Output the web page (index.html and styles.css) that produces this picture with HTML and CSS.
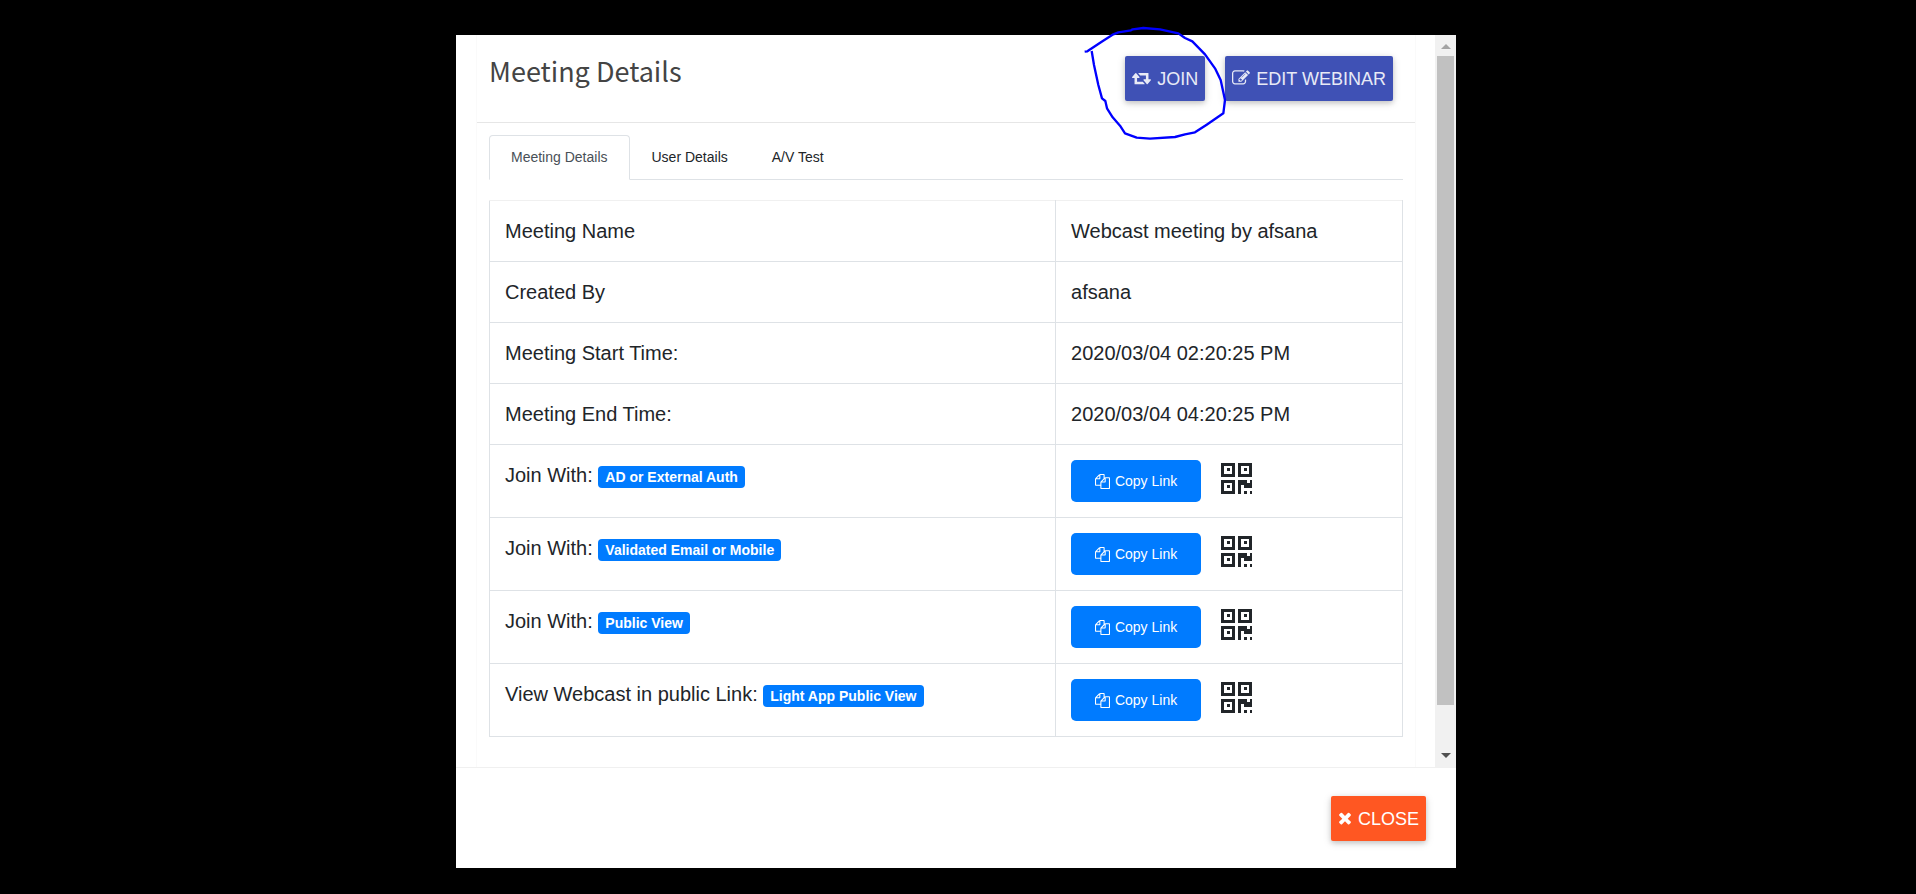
FILE: index.html
```html
<!DOCTYPE html>
<html lang="en">

<head>
    <meta charset="UTF-8">
    <meta name="viewport" content="width=device-width, initial-scale=1.0">
    <title>Meeting Details</title>
    <link rel="stylesheet" href="styles.css">
</head>

<body>
    <!-- shared icons -->
    <svg class="sprite" aria-hidden="true">
        <symbol id="retweet" viewBox="0 0 1920 1792">
            <path d="M1280 1504q0 13-9.500 22.500t-22.500 9.500h-960q-8 0-13.500-2t-9-7-5.500-8-3-11.500-1-11.500v-600h-192q-26 0-45-19t-19-45q0-24 15-41l320-384q19-22 49-22t49 22l320 384q15 17 15 41 0 26-19 45t-45 19h-192v384h576q16 0 25 11l160 192q7 10 7 21zm640-416q0 24-15 41l-320 384q-20 23-49 23t-49-23l-320-384q-15-17-15-41 0-26 19-45t45-19h192v-384h-576q-16 0-25-12l-160-192q-7-9-7-20 0-13 9.500-22.500t22.500-9.500h960q8 0 13.500 2t9 7 5.500 8 3 11.500 1 11.500v600h192q26 0 45 19t19 45z" />
        </symbol>
        <symbol id="edit" viewBox="0 0 1792 1792">
            <path d="M888 1184l116-116-152-152-116 116v56h96v96h56zm440-720q-16-16-33 1l-350 350q-17 17-1 33t33-1l350-350q17-17 1-33zm80 594v190q0 119-84.500 203.500t-203.500 84.500h-832q-119 0-203.500-84.500t-84.500-203.500v-832q0-119 84.500-203.500t203.500-84.500h832q63 0 117 25 15 7 18 23 3 17-9 29l-49 49q-14 14-32 8-23-6-45-6h-832q-66 0-113 47t-47 113v832q0 66 47 113t113 47h832q66 0 113-47t47-113v-126q0-13 9-22l64-64q15-15 35-7t20 29zm-96-738l288 288-672 672h-288v-288zm444 132l-92 92-288-288 92-92q28-28 68-28t68 28l152 152q28 28 28 68t-28 68z" />
        </symbol>
        <symbol id="copy" viewBox="0 0 1792 1792">
            <path d="M1696 384q40 0 68 28t28 68v1216q0 40-28 68t-68 28h-960q-40 0-68-28t-28-68v-288h-544q-40 0-68-28t-28-68v-672q0-40 20-88t48-76l408-408q28-28 76-48t88-20h416q40 0 68 28t28 68v328q68-40 128-40h416zm-544 213l-299 299h299v-299zm-640-384l-299 299h299v-299zm196 647l316-316v-416h-384v416q0 40-28 68t-68 28h-416v640h512v-256q0-40 20-88t48-76zm956 804v-1152h-384v416q0 40-28 68t-68 28h-416v640h896z" />
        </symbol>
        <symbol id="times" viewBox="192 0 1408 1792">
            <path d="M1490 1322q0 40-28 68l-136 136q-28 28-68 28t-68-28l-294-294-294 294q-28 28-68 28t-68-28l-136-136q-28-28-28-68t28-68l294-294-294-294q-28-28-28-68t28-68l136-136q28-28 68-28t68 28l294 294 294-294q28-28 68-28t68 28l136 136q28 28 28 68t-28 68l-294 294 294 294q28 28 28 68z" />
        </symbol>
        <symbol id="qrcode" viewBox="0 0 31 31">
            <path fill-rule="evenodd" d="M0 0h14v14H0zM3 3v8h8V3zM6 5h3v3H6zM17 0h14v14H17zM20 3v8h8V3zM23 5h3v3h-3zM0 17h14v14H0zM3 20v8h8v-8zM6 22h3v3H6zM17 17h9v3h3v-3h2v8h-8v-3h-3v9h-3zM23 28h3v3h-3zM29 28h2v3h-2z" />
        </symbol>
    </svg>

    <div class="overlay">
        <div class="modal" role="dialog" aria-labelledby="title">
            <div class="modal-body">
                <div class="content">
                    <div class="card">
                        <header class="card-header">
                            <h1 id="title">Meeting Details</h1>
                            <div class="actions">
                                <div class="marked">
                                    <button type="button" class="btn btn-indigo"><svg class="icon-wide"><use href="#retweet" /></svg>JOIN</button>
                                    <!-- pen mark round the join button -->
                                    <svg class="pen" viewBox="60 9 450 360" aria-hidden="true">
                                        <path d="M74 95L82 94L125 65L160 43L175 37L213 31L218 28L250 24L300 28L355 40L375 54L397 64L435 103L465 145L482 180L489 212L495 240L490 280L440 314L405 337L375 343L345 351L270 356L230 353L195 340L180 317L158 292L141 265L136 243L126 235L115 195L102 135L95 93" />
                                    </svg>
                                </div>
                                <button type="button" class="btn btn-indigo"><svg class="icon"><use href="#edit" /></svg>EDIT WEBINAR</button>
                            </div>
                        </header>

                        <div class="card-body">
                            <nav class="tabs">
                                <a href="#" class="active">Meeting Details</a>
                                <a href="#">User Details</a>
                                <a href="#">A/V Test</a>
                            </nav>

                            <table>
                                <tr>
                                    <td>Meeting Name</td>
                                    <td>Webcast meeting by afsana</td>
                                </tr>
                                <tr>
                                    <td>Created By</td>
                                    <td>afsana</td>
                                </tr>
                                <tr>
                                    <td>Meeting Start Time:</td>
                                    <td>2020/03/04 02:20:25 PM</td>
                                </tr>
                                <tr>
                                    <td>Meeting End Time:</td>
                                    <td>2020/03/04 04:20:25 PM</td>
                                </tr>
                                <tr>
                                    <td>Join With: <span class="badge">AD or External Auth</span></td>
                                    <td>
                                        <div class="link">
                                            <button type="button" class="btn-copy"><svg><use href="#copy" /></svg>Copy Link</button>
                                            <svg class="qr"><use href="#qrcode" /></svg>
                                        </div>
                                    </td>
                                </tr>
                                <tr>
                                    <td>Join With: <span class="badge">Validated Email or Mobile</span></td>
                                    <td>
                                        <div class="link">
                                            <button type="button" class="btn-copy"><svg><use href="#copy" /></svg>Copy Link</button>
                                            <svg class="qr"><use href="#qrcode" /></svg>
                                        </div>
                                    </td>
                                </tr>
                                <tr>
                                    <td>Join With: <span class="badge">Public View</span></td>
                                    <td>
                                        <div class="link">
                                            <button type="button" class="btn-copy"><svg><use href="#copy" /></svg>Copy Link</button>
                                            <svg class="qr"><use href="#qrcode" /></svg>
                                        </div>
                                    </td>
                                </tr>
                                <tr>
                                    <td>View Webcast in public Link: <span class="badge">Light App Public View</span></td>
                                    <td>
                                        <div class="link">
                                            <button type="button" class="btn-copy"><svg><use href="#copy" /></svg>Copy Link</button>
                                            <svg class="qr"><use href="#qrcode" /></svg>
                                        </div>
                                    </td>
                                </tr>
                            </table>
                        </div>
                    </div>
                </div>

                <div class="scrollbar" aria-hidden="true">
                    <span class="arrow up"></span>
                    <div class="track">
                        <div class="thumb"></div>
                    </div>
                    <span class="arrow down"></span>
                </div>
            </div>

            <footer class="modal-footer">
                <button type="button" class="btn btn-orange"><svg class="icon-narrow"><use href="#times" /></svg>CLOSE</button>
            </footer>
        </div>
    </div>
</body>

</html>
```

FILE: styles.css
```css
* {
    box-sizing: border-box;
}

body {
    margin: 0;
    background: #000;
    color: #212529;
    font-family: "Liberation Sans", Arial, sans-serif;
    font-size: 20px;
    line-height: 30px;
}

button {
    border: 0;
    font-family: inherit;
    cursor: pointer;
}

svg {
    fill: currentColor;
}

.sprite {
    display: none;
}

.overlay {
    padding: 35px 4px 26px 0;
}

.modal {
    max-width: 1000px;
    margin: 0 auto;
    background: #fff;
}

.modal-body {
    display: flex;
    border-bottom: 1px solid #f0f0f0;
}

.content {
    flex: 1;
    min-width: 0;
    padding: 0 19px 0 20px;
}

.card {
    height: 100%;
    border: solid #fafafa;
    border-width: 0 1px;
}

.card-header {
    display: flex;
    justify-content: space-between;
    padding: 21px 22px 21px 12px;
    border-bottom: 1px solid #e6e6e6;
}

.card-header h1 {
    margin: 0;
    color: #444;
    font-family: "Noto Sans CJK SC", sans-serif;
    font-size: 27px;
    font-weight: 400;
    line-height: 30px;
}

.actions {
    display: flex;
    gap: 20px;
}

.btn {
    display: flex;
    align-items: center;
    gap: 6px;
    height: 45px;
    padding: 1px 7px 0;
    border-radius: 2px;
    font-size: 18px;
    box-shadow: 0 2px 5px rgba(0, 0, 0, .16), 0 2px 10px rgba(0, 0, 0, .12);
}

.btn svg {
    height: 18px;
    margin-bottom: 2px;
}

.icon-wide {
    width: 19px;
}

.icon {
    width: 18px;
}

.icon-narrow {
    width: 14px;
}

.btn-indigo {
    background: #3f51b5;
    color: #e8eaf6;
}

.btn-orange {
    background: #ff5722;
    color: #fff;
}

.marked {
    position: relative;
    z-index: 1;
}

.marked .pen {
    position: absolute;
    top: -33px;
    left: -45px;
    width: 150px;
    height: 120px;
    fill: none;
    stroke: #00f;
    stroke-width: 7;
    stroke-linejoin: round;
    pointer-events: none;
}

.card-body {
    padding: 12px 12px 30px;
}

.tabs {
    display: flex;
    margin-bottom: 20px;
    border-bottom: 1px solid #dee2e6;
}

.tabs a {
    margin-bottom: -1px;
    padding: 6px 21px 7px;
    border: 1px solid transparent;
    color: #212529;
    font-size: 14px;
    text-decoration: none;
}

.tabs .active {
    border-color: #dee2e6 #dee2e6 #fff;
    border-radius: 4px 4px 0 0;
    background: #fff;
    color: #495057;
}

table {
    width: 100%;
    border-collapse: collapse;
}

td {
    padding: 15px;
    border: 1px solid #dee2e6;
    vertical-align: top;
}

td:first-child {
    width: 62%;
}

tr:first-child td {
    border-top-color: #f0f0f0;
}

.badge {
    display: inline-block;
    padding: 3px 7px;
    border-radius: 4px;
    background: #007bff;
    color: #fff;
    font-size: 14px;
    font-weight: 700;
    line-height: 16px;
}

.link {
    display: flex;
    gap: 20px;
}

.btn-copy {
    display: flex;
    align-items: center;
    justify-content: center;
    gap: 5px;
    width: 130px;
    height: 42px;
    border-radius: 5px;
    background: #007bff;
    color: #fff;
    font-size: 14px;
}

.btn-copy svg {
    width: 15px;
    height: 15px;
}

.qr {
    width: 31px;
    height: 31px;
    margin-top: 3px;
}

.scrollbar {
    display: flex;
    flex-direction: column;
    align-items: center;
    width: 21px;
    padding: 9px 2px;
    background: #f1f1f1;
}

.arrow {
    border: 5px solid transparent;
    border-top-width: 0;
    border-bottom-width: 0;
}

.up {
    border-bottom: 5px solid #a3a3a3;
}

.down {
    border-top: 5px solid #505050;
}

.track {
    flex: 1;
    width: 100%;
    margin: 7px 0;
}

.thumb {
    height: 94%;
    background: #c1c1c1;
}

.modal-footer {
    display: flex;
    justify-content: flex-end;
    padding: 28px 30px 27px;
}
```
